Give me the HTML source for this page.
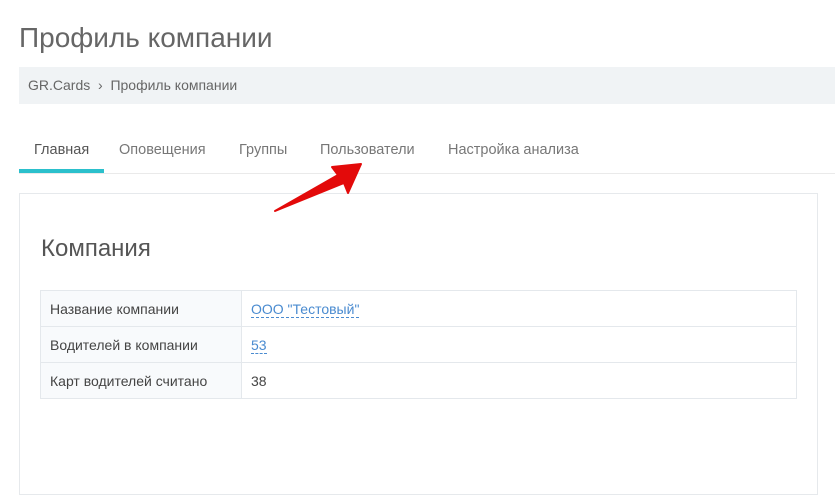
<!DOCTYPE html>
<html><head><meta charset="utf-8"><style>
body{margin:0;width:835px;height:433px;overflow:hidden;background:#fff;font-family:"Liberation Sans",sans-serif;position:relative}
.t{position:absolute;left:19px;top:22px;font-size:28px;color:#666;font-weight:300}
.bc{position:absolute;left:19px;top:67px;width:816px;height:37px;background:#f0f3f5;font-size:14px;color:#666;line-height:37px}
.bc span{padding-left:9px}
.tabs{position:absolute;left:19px;top:128px;width:816px;height:45px;border-bottom:1px solid #eaeaea}
.tab{position:absolute;top:14px;font-size:14.5px;color:#777}
.ul{position:absolute;left:0;top:41px;width:85px;height:4px;background:#2bc0cc}
.panel{position:absolute;left:19px;top:193px;width:797px;height:300px;border:1px solid #e6e9ec}
.h{position:absolute;left:21px;top:41px;font-size:24px;color:#555}
table{position:absolute;left:20px;top:96px;width:757px;border-collapse:collapse;font-size:14px;color:#444}
td{border:1px solid #e4e8ec;height:35px;padding:0 9px}
td.l{width:182px;background:#f8fafc}
a{color:#4a8bd0;text-decoration:none;border-bottom:1px dashed #4a8bd0}
</style></head><body>
<div class="t">Профиль компании</div>
<div class="bc"><span>GR.Cards &nbsp;›&nbsp; Профиль компании</span></div>
<div class="tabs">
<div class="tab" style="left:15px;color:#555">Главная</div>
<div class="tab" style="left:100px">Оповещения</div>
<div class="tab" style="left:220px">Группы</div>
<div class="tab" style="left:301px">Пользователи</div>
<div class="tab" style="left:429px">Настройка анализа</div>
<div class="ul"></div>
</div>
<div class="panel">
<div class="h">Компания</div>
<table>
<tr><td class="l">Название компании</td><td><a>ООО "Тестовый"</a></td></tr>
<tr><td class="l">Водителей в компании</td><td><a>53</a></td></tr>
<tr><td class="l">Карт водителей считано</td><td>38</td></tr>
</table>
</div>
<svg style="position:absolute;left:0;top:0" width="835" height="433"><polygon points="275,211 338,175 332,167 361,164 348,193 344,183" fill="#e30a0a" stroke="#e30a0a" stroke-width="2" stroke-linejoin="round"/></svg>
</body></html>
